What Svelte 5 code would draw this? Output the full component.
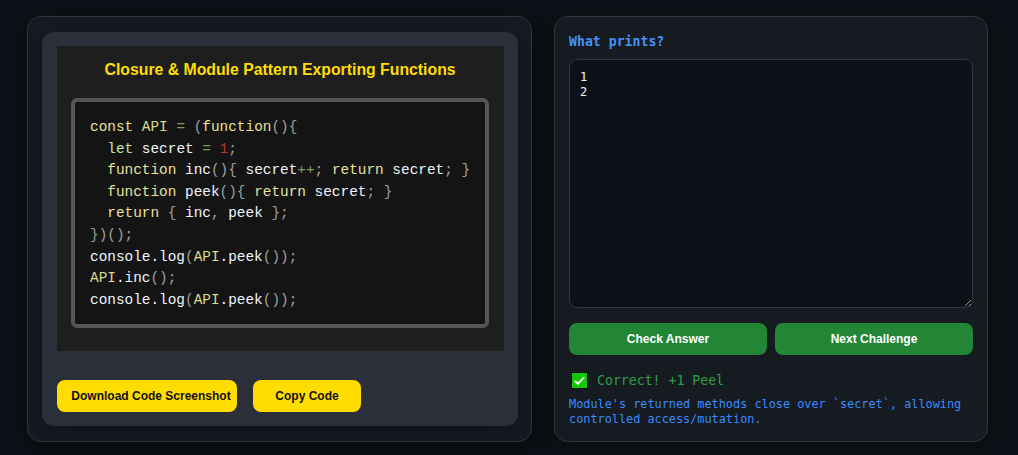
<script lang="ts">
  // each code line is a list of [text, token class] pairs
  const code = [
    [['const', 'kw'], [' ', ''], ['API', 'const'], [' ', ''], ['=', 'op'], [' ', ''], ['(', 'pn'], ['function', 'kw'], ['(){', 'pn']],
    [['  ', ''], ['let', 'let'], [' ', ''], ['secret', 'id'], [' ', ''], ['=', 'op'], [' ', ''], ['1', 'num'], [';', 'pn']],
    [['  ', ''], ['function', 'kw'], [' ', ''], ['inc', 'id'], ['(){', 'pn'], [' ', ''], ['secret', 'id'], ['++', 'op'], [';', 'pn'], [' ', ''], ['return', 'kw'], [' ', ''], ['secret', 'id'], ['; }', 'pn']],
    [['  ', ''], ['function', 'kw'], [' ', ''], ['peek', 'id'], ['(){', 'pn'], [' ', ''], ['return', 'kw'], [' ', ''], ['secret', 'id'], ['; }', 'pn']],
    [['  ', ''], ['return', 'kw'], [' ', ''], ['{', 'pn'], [' ', ''], ['inc', 'id'], [',', 'pn'], [' ', ''], ['peek', 'id'], [' ', ''], ['};', 'pn']],
    [['})();', 'pn']],
    [['console.log', 'id'], ['(', 'pn'], ['API', 'const'], ['.peek', 'id'], ['());', 'pn']],
    [['API', 'const'], ['.inc', 'id'], ['();', 'pn']],
    [['console.log', 'id'], ['(', 'pn'], ['API', 'const'], ['.peek', 'id'], ['());', 'pn']]
  ];

  let answer = $state('1\n2');
</script>

<main class="page">
  <section class="card left">
    <div class="panel">
      <div class="shot">
        <h2>Closure &amp; Module Pattern Exporting Functions</h2>
        <pre class="code">{#each code as line}<div class="line">{#each line as [text, cls]}<span class={cls}>{text}</span>{/each}</div>{/each}</pre>
      </div>
      <div class="actions">
        <button class="yellow wide">Download Code Screenshot</button>
        <button class="yellow narrow">Copy Code</button>
      </div>
    </div>
  </section>

  <section class="card right">
    <label for="answer">What prints?</label>
    <textarea id="answer" bind:value={answer}></textarea>
    <div class="buttons">
      <button class="green">Check Answer</button>
      <button class="green">Next Challenge</button>
    </div>
    <div class="result">
      <svg class="tick" width="17" height="17" viewBox="0 0 17 17" aria-hidden="true">
        <rect x="0.5" y="0.5" width="16" height="16" fill="#16c60c" stroke="#0a0a0a" />
        <path d="M3.8 9 L7 11.8 L13.2 5.2" fill="none" stroke="#fff" stroke-width="1.8" />
      </svg>
      <span>Correct! +1 Peel</span>
    </div>
    <p class="explain">Module's returned methods close over `secret`, allowing controlled access/mutation.</p>
  </section>
</main>

<style>
  :global(body) {
    margin: 0;
    background: #0d1117;
  }

  .page {
    display: flex;
    align-items: stretch;
    gap: 22px;
    box-sizing: border-box;
    height: 455px;
    padding: 16px 30px 13px 27px;
    overflow: hidden;
  }

  .card {
    box-sizing: border-box;
    background: #161b22;
    border: 1px solid #30363d;
    border-radius: 14px;
    box-shadow: 0 4px 20px rgba(0, 0, 0, 0.25);
  }

  .left {
    width: 505px;
    padding: 15px 14px;
    display: flex;
  }

  .right {
    width: 434px;
    padding: 14px;
    display: flex;
    flex-direction: column;
    font-family: "DejaVu Sans Mono", monospace;
  }

  .panel {
    flex: 1;
    box-sizing: border-box;
    background: #2a2f3a;
    border-radius: 12px;
    padding: 14px 14px 14px 15px;
    box-shadow: 0 6px 24px rgba(0, 0, 0, 0.35);
  }

  .shot {
    box-sizing: border-box;
    height: 305px;
    background: #1e1e1e;
    padding: 0 15px 0 14px;
    overflow: hidden;
  }

  h2 {
    margin: 0;
    height: 52px;
    text-align: center;
    color: #ffdd00;
    font: bold 15.8px/47px "Liberation Sans", sans-serif;
  }

  .code {
    box-sizing: border-box;
    height: 230px;
    margin: 0;
    padding: 15px 15px;
    background: #141414;
    border: 4px solid #555;
    border-radius: 6px;
    font: 14.4px/21.6px "Liberation Mono", monospace;
    color: #eee;
    white-space: pre;
  }

  .kw { color: #e8e29a; }
  .const { color: #d9dc8a; }
  .let { color: #bfe8a4; }
  .id { color: #f0f4ff; }
  .op { color: #7f9a60; }
  .pn { color: #a0a0a0; }
  .num { color: #b5382a; }

  .actions {
    display: flex;
    gap: 16px;
    margin-top: 29px;
  }

  button {
    height: 32px;
    border: none;
    border-radius: 8px;
    font: bold 12px "Liberation Sans", sans-serif;
    cursor: pointer;
    padding: 0;
  }

  .yellow {
    background: #ffdd00;
    color: #111;
  }

  .wide {
    width: 180px;
    padding-left: 8px;
  }

  .narrow { width: 108px; }

  label {
    display: block;
    flex: none;
    height: 15px;
    margin: 3px 0 10px;
    color: #4493f8;
    font-size: 13.2px;
    font-weight: bold;
    line-height: 15px;
  }

  textarea {
    box-sizing: border-box;
    flex: none;
    width: 404px;
    height: 249px;
    margin: 0;
    padding: 10px;
    background: #0d1117;
    border: 1px solid #30363d;
    border-radius: 8px;
    color: #f0f6fc;
    font: 12px/15px "DejaVu Sans Mono", monospace;
    outline: none;
  }

  .buttons {
    display: flex;
    flex: none;
    gap: 8px;
    margin-top: 15px;
  }

  .green {
    flex: 1;
    background: #238636;
    color: #fff;
  }

  .result {
    display: flex;
    flex: none;
    align-items: center;
    gap: 9px;
    margin: 17px 0 0 2px;
    height: 17px;
    color: #2ea043;
    font-size: 13.2px;
  }

  .tick { flex: none; }

  .explain {
    margin: 8px 0 0;
    color: #388bfd;
    font-size: 11.85px;
    line-height: 15px;
  }
</style>
